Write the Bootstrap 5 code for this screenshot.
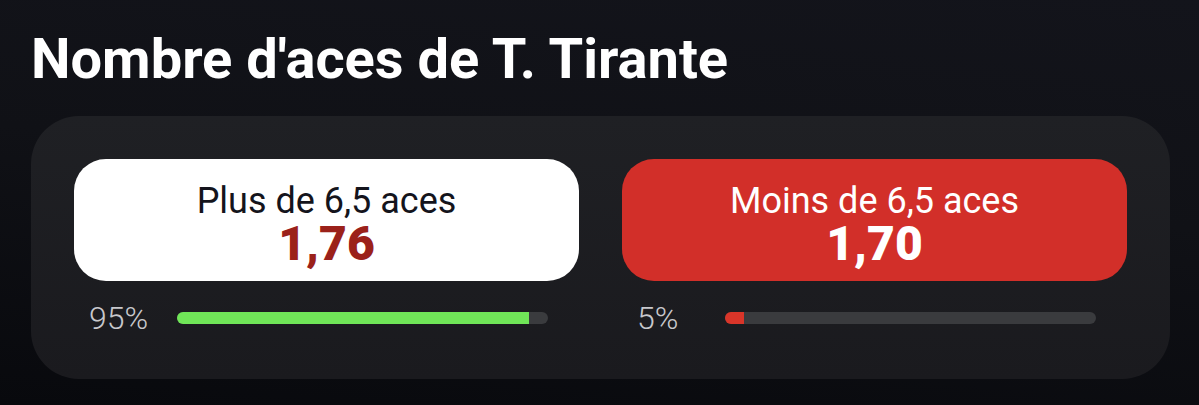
<!DOCTYPE html>
<html lang="fr">
<head>
<meta charset="utf-8">
<meta name="viewport" content="width=device-width, initial-scale=1">
<title>Nombre d'aces de T. Tirante</title>
<link href="https://cdn.jsdelivr.net/npm/bootstrap@5.3.0/dist/css/bootstrap.min.css" rel="stylesheet">
<style>
body{background:linear-gradient(185deg,#13141b 0%,#101116 45%,#08090d 100%) fixed;font-family:Roboto,"Liberation Sans",sans-serif;color:#fff}
.market{padding:31px 29px 26px 31px}
.market-title{font-size:56px;line-height:56px;font-weight:700;margin:0 0 29px}
.panel{background:linear-gradient(#1f2024,#1a1a1e);border-radius:48px;padding:43px 43px 44px}
.choices{gap:43px}
.odd{border:0;border-radius:32px;padding:22px 16px 14px;background:#fff;color:#14141c;font-size:36px;line-height:40px}
.odd strong{display:block;font-size:48px;line-height:46px;font-weight:900;color:#9b211a}
.odd-alt{background:#d22f29;color:#fff}
.odd-alt strong{color:#fff}
.stat{padding:20px 31px 0 15px}
.stat-label{width:88px;font-size:32px;line-height:34px;font-weight:300;color:#c8c8cc}
.meter{height:12px;border-radius:6px;background:#3a3b3e}
.fill-green{background:#70e658}
.fill-red{background:#d93529}
</style>
</head>
<body>
<main class="market">
<h1 class="market-title">Nombre d'aces de T. Tirante</h1>
<section class="panel">
<div class="choices d-flex">
<div class="flex-fill w-50">
<button type="button" class="odd w-100">Plus de 6,5 aces<strong>1,76</strong></button>
<div class="stat d-flex align-items-center"><span class="stat-label" id="share-over">95%</span><div class="progress meter flex-grow-1" role="progressbar" aria-labelledby="share-over" aria-valuenow="95" aria-valuemin="0" aria-valuemax="100"><div class="progress-bar fill-green" style="width:95%"></div></div></div>
</div>
<div class="flex-fill w-50">
<button type="button" class="odd odd-alt w-100">Moins de 6,5 aces<strong>1,70</strong></button>
<div class="stat d-flex align-items-center"><span class="stat-label" id="share-under">5%</span><div class="progress meter flex-grow-1" role="progressbar" aria-labelledby="share-under" aria-valuenow="5" aria-valuemin="0" aria-valuemax="100"><div class="progress-bar fill-red" style="width:5%"></div></div></div>
</div>
</div>
</section>
</main>
<script src="https://cdn.jsdelivr.net/npm/bootstrap@5.3.0/dist/js/bootstrap.bundle.min.js"></script>
</body>
</html>
